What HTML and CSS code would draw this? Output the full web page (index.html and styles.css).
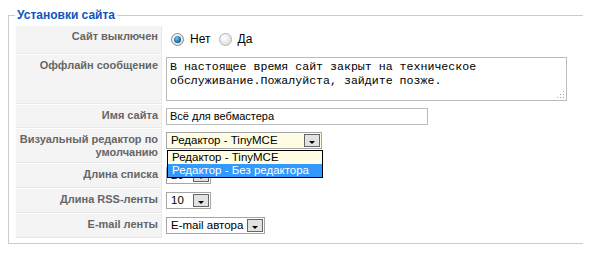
FILE: index.html
```html
<!DOCTYPE html>
<html lang="ru">
<head>
    <meta charset="UTF-8">
    <title>Установки сайта</title>
    <link rel="stylesheet" href="styles.css">
</head>
<body>
<fieldset class="adminform">
    <legend>Установки сайта</legend>
    <table class="settings">
        <tr class="row-offline">
            <td class="key">Сайт выключен</td>
            <td class="value">
                <span class="radio checked"></span><span class="radio-label">Нет</span>
                <span class="radio"></span><span class="radio-label">Да</span>
            </td>
        </tr>
        <tr class="row-message">
            <td class="key">Оффлайн сообщение</td>
            <td class="value">
                <div class="textarea">В настоящее время сайт закрыт на техническое обслуживание.Пожалуйста, зайдите позже.<span class="grip"></span></div>
            </td>
        </tr>
        <tr class="row-name">
            <td class="key">Имя сайта</td>
            <td class="value"><div class="input">Всё для вебмастера</div></td>
        </tr>
        <tr class="row-editor">
            <td class="key">Визуальный редактор по<br>умолчанию</td>
            <td class="value">
                <div class="select editor">
                    <span class="select-text">Редактор - TinyMCE</span><span class="arrow"></span>
                    <!-- open list -->
                    <div class="dropdown">
                        <div class="option">Редактор - TinyMCE</div>
                        <div class="option selected">Редактор - Без редактора</div>
                    </div>
                </div>
            </td>
        </tr>
        <tr class="row-plain">
            <td class="key">Длина списка</td>
            <td class="value"><div class="select"><span class="select-text num">20</span><span class="arrow"></span></div></td>
        </tr>
        <tr class="row-plain">
            <td class="key">Длина RSS-ленты</td>
            <td class="value"><div class="select"><span class="select-text num">10</span><span class="arrow"></span></div></td>
        </tr>
        <tr class="row-plain">
            <td class="key">E-mail ленты</td>
            <td class="value"><div class="select"><span class="select-text">E-mail автора</span><span class="arrow"></span></div></td>
        </tr>
    </table>
</fieldset>
</body>
</html>
```

FILE: styles.css
```css
/* Page */
body {
    margin: 8px;
    background-color: #fff;
    font-family: "Liberation Sans", Arial, sans-serif;
    font-size: 11px;
    overflow: hidden;
}

/* Fieldset */
.adminform {
    width: 620px;
    margin: 0;
    padding: 3px 5px 4px 6px;
    border: 1px solid #ccc;
    border-right: none;
}

.adminform legend {
    color: #0b55c4;
    font-size: 12px;
    font-weight: bold;
    padding: 0 2px;
    margin-left: 0;
}

/* Settings table */
.settings {
    border-collapse: separate;
    border-spacing: 1px;
    width: 100%;
    table-layout: fixed;
}

.settings td {
    padding: 3px;
    vertical-align: top;
}

.settings td.key {
    width: 142px;
    background-color: #f4f4f4;
    border-bottom: 1px solid #e9e9e9;
    border-right: 1px solid #e9e9e9;
    color: #666;
    font-weight: bold;
    text-align: right;
    line-height: 13px;
    padding: 4px 3px 3px 0;
    white-space: nowrap;
}

.settings td.value {
    color: #000;
}

.row-offline td { height: 19px; }
.row-message td { height: 41px; }
.row-name td { height: 15px; }
.row-editor td { height: 26px; }
.row-plain td { height: 16px; }

.row-offline td.value {
    padding-top: 6px;
}

/* Radios */
.radio {
    display: inline-block;
    width: 11px;
    height: 11px;
    border: 1px solid #b4b4b4;
    border-radius: 50%;
    background: radial-gradient(circle at 40% 35%, #fff 0%, #e6e6e6 60%, #cfcfcf 100%);
    vertical-align: -3px;
    margin-left: 5px;
    position: relative;
}

.radio.checked {
    border-color: #8a8a8a;
}

.radio.checked::after {
    content: "";
    position: absolute;
    left: 2px;
    top: 2px;
    width: 7px;
    height: 7px;
    border-radius: 50%;
    background: radial-gradient(circle at 40% 35%, #7fc4f0 0%, #1a73b8 55%, #0b3f6e 100%);
}

.radio-label {
    margin-left: 6px;
    font-size: 12px;
}

/* Text fields */
.textarea {
    position: relative;
    width: 393px;
    height: 38px;
    border: 1px solid #bbb;
    padding: 2px 3px;
    font-family: "Liberation Mono", "Courier New", monospace;
    font-size: 11.6px;
    line-height: 14px;
    margin-top: -1px;
}

.grip {
    position: absolute;
    right: 2px;
    bottom: 2px;
    width: 8px;
    height: 8px;
    background:
        radial-gradient(circle, #aaa 0.8px, transparent 1px) 0 0 / 3px 3px;
    clip-path: polygon(100% 0, 100% 100%, 0 100%);
}

.input {
    width: 254px;
    height: 15px;
    border: 1px solid #bbb;
    padding: 0 3px;
    line-height: 15px;
    font-size: 11px;
}

/* Selects */
.select {
    position: relative;
    display: inline-flex;
    align-items: center;
    height: 15px;
    border: 1px solid #a5a5a5;
    background-color: #fff;
    padding: 0 1px 0 4px;
    font-size: 11.5px;
}

.select.editor {
    width: 149px;
    justify-content: space-between;
    background-color: #fffde3;
}

.select-text {
    line-height: 15px;
    margin-right: 4px;
}

.select-text.num {
    width: 18px;
}

.arrow {
    position: relative;
    width: 14px;
    height: 11px;
    border: 1px solid #666;
    background-color: #e2e2e2;
}

.arrow::after {
    content: "";
    position: absolute;
    left: 4px;
    bottom: 2px;
    border-left: 3px solid transparent;
    border-right: 3px solid transparent;
    border-top: 3px solid #000;
}

/* Open list */
.dropdown {
    position: absolute;
    left: 0;
    top: 17px;
    width: 154px;
    border: 1px solid #000;
    background-color: #fffde3;
    z-index: 2;
}

.option {
    height: 13px;
    line-height: 13px;
    padding: 0 4px;
    white-space: nowrap;
    font-size: 11.5px;
}

.option.selected {
    background-color: #3399ff;
    color: #fff;
}
```
